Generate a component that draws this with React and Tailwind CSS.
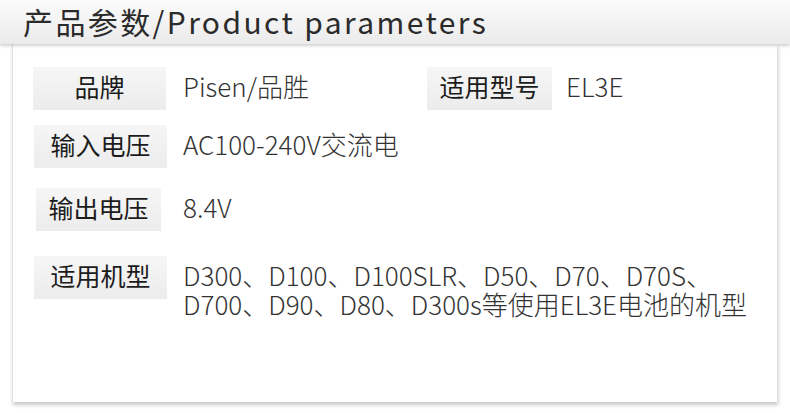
import React from "react";

const font = { fontFamily: '"Noto Sans CJK SC", "Noto Sans", sans-serif' };

function Label({ children, className = "" }) {
  return (
    <div
      className={`h-[43px] pb-[5px] flex items-center justify-center shrink-0 bg-gradient-to-b from-[#f6f6f6] to-[#ececec] text-[25px] font-normal text-[#1c1c1c] leading-none ${className}`}
    >
      {children}
    </div>
  );
}

function Value({ children, className = "" }) {
  return (
    <div className={`text-[26px] font-light text-[#333] leading-[29px] ${className}`}>
      {children}
    </div>
  );
}

export default function App() {
  return (
    <div className="w-[790px] h-[413px] bg-white overflow-hidden" style={font}>
      {/* title bar */}
      <div className="h-[44px] pb-[3px] bg-gradient-to-b from-[#fbfbfb] to-[#ebebeb] shadow-[0_2px_3px_rgba(0,0,0,0.18)] relative z-10 flex items-center pl-[23px]">
        <h1 className="text-[30px] font-normal text-[#2b2b2b] tracking-[2.4px] leading-none">
          产品参数/Product parameters
        </h1>
      </div>

      {/* card */}
      <div className="ml-[12px] w-[765px] h-[358px] bg-white border-l border-[#e2e2e2] shadow-[1px_3px_4px_rgba(0,0,0,0.22)] pt-[23px]">
        <div className="flex items-center">
          <Label className="ml-[20px] w-[133px]">品牌</Label>
          <Value className="ml-[17px] w-[244px] mb-[6px]">Pisen/品胜</Value>
          <Label className="w-[125px]">适用型号</Label>
          <Value className="ml-[14px] mb-[6px]">EL3E</Value>
        </div>

        <div className="flex items-center mt-[15px]">
          <Label className="ml-[21px] w-[133px]">输入电压</Label>
          <Value className="ml-[16px] mb-[6px]">AC100-240V交流电</Value>
        </div>

        <div className="flex items-center mt-[20px]">
          <Label className="ml-[23px] w-[125px]">输出电压</Label>
          <Value className="ml-[22px] mb-[6px]">8.4V</Value>
        </div>

        <div className="flex items-start mt-[25px]">
          <Label className="ml-[21px] w-[133px]">适用机型</Label>
          <Value className="ml-[16px] mt-[4px]">
            <div>D300、D100、D100SLR、D50、D70、D70S、</div>
            <div>D700、D90、D80、D300s等使用EL3E电池的机型</div>
          </Value>
        </div>
      </div>
    </div>
  );
}
